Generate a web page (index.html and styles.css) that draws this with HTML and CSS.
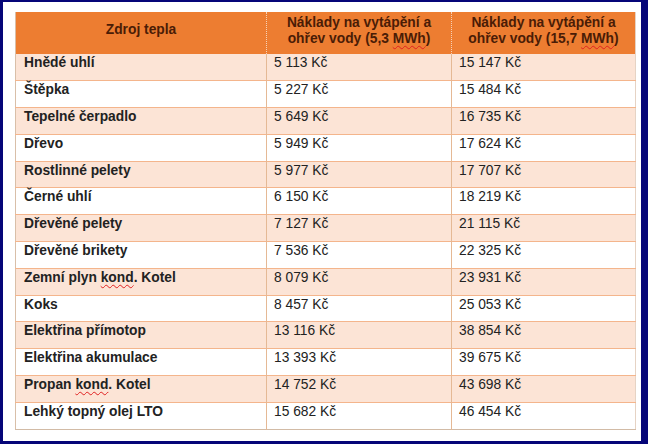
FILE: index.html
```html
<!DOCTYPE html>
<html lang="cs">
<head>
<meta charset="utf-8">
<title>Náklady na vytápění</title>
<link rel="stylesheet" href="styles.css">
</head>
<body>
<div class="frame">
  <table class="costs">
    <colgroup>
      <col class="c1"><col class="c2"><col class="c3">
    </colgroup>
    <thead>
      <tr>
        <th class="h1">Zdroj tepla</th>
        <th>Náklady na vytápění a<br>ohřev vody (5,3 <span class="sp">MWh</span>)</th>
        <th>Náklady na vytápění a<br>ohřev vody (15,7 <span class="sp">MWh</span>)</th>
      </tr>
    </thead>
    <tbody>
      <tr><td>Hnědé uhlí</td><td>5 113 Kč</td><td>15 147 Kč</td></tr>
      <tr><td>Štěpka</td><td>5 227 Kč</td><td>15 484 Kč</td></tr>
      <tr><td>Tepelné čerpadlo</td><td>5 649 Kč</td><td>16 735 Kč</td></tr>
      <tr><td>Dřevo</td><td>5 949 Kč</td><td>17 624 Kč</td></tr>
      <tr><td>Rostlinné pelety</td><td>5 977 Kč</td><td>17 707 Kč</td></tr>
      <tr><td>Černé uhlí</td><td>6 150 Kč</td><td>18 219 Kč</td></tr>
      <tr><td>Dřevěné pelety</td><td>7 127 Kč</td><td>21 115 Kč</td></tr>
      <tr><td>Dřevěné brikety</td><td>7 536 Kč</td><td>22 325 Kč</td></tr>
      <tr><td>Zemní plyn <span class="sp">kond</span>. Kotel</td><td>8 079 Kč</td><td>23 931 Kč</td></tr>
      <tr><td>Koks</td><td>8 457 Kč</td><td>25 053 Kč</td></tr>
      <tr><td>Elektřina přímotop</td><td>13 116 Kč</td><td>38 854 Kč</td></tr>
      <tr><td>Elektřina akumulace</td><td>13 393 Kč</td><td>39 675 Kč</td></tr>
      <tr><td>Propan <span class="sp">kond</span>. Kotel</td><td>14 752 Kč</td><td>43 698 Kč</td></tr>
      <tr><td>Lehký topný olej LTO</td><td>15 682 Kč</td><td>46 454 Kč</td></tr>
    </tbody>
  </table>
</div>
</body>
</html>
```

FILE: styles.css
```css
html, body {
  margin: 0;
  padding: 0;
  background: #ffffff;
}

.frame {
  box-sizing: border-box;
  width: 648px;
  height: 444px;
  border-style: solid;
  border-color: #050578;
  border-width: 2px 7px 3px 3px;
  background: #ffffff;
  padding: 10px 0 0 12px;
  font-family: "Liberation Sans", Arial, sans-serif;
  font-size: 13.8px;
  color: #222222;
}

.costs {
  border-collapse: collapse;
  table-layout: fixed;
  width: 620px;
  border-left: 1px solid #d9bfa8;
  border-bottom: 1px solid #d2bba6;
  border-right: 1px solid #e6d3c4;
}

.c1 { width: 251px; }
.c2 { width: 185px; }
.c3 { width: 184px; }

.costs thead tr {
  height: 42px;
  background: #ed7d31;
}

.costs th {
  vertical-align: top;
  padding: 3px 2px 0;
  line-height: 16px;
  font-weight: bold;
  color: #4a1c06;
  text-align: center;
  border-left: 1px dotted #f6d2b8;
}

.costs th.h1 {
  padding-top: 10px;
  border-left: none;
}

.costs tbody tr {
  height: 26.8px;
}

.costs tbody tr:nth-child(odd) {
  background: #fce4d6;
}

.costs td {
  vertical-align: top;
  padding: 1px 6px 0 7px;
  line-height: 15px;
  border-top: 1px solid #f4b58c;
  border-left: 1px solid #e5b995;
  white-space: nowrap;
}

.costs td:first-child {
  font-weight: bold;
  padding-left: 8px;
  border-left: none;
}

.costs tbody tr:first-child td {
  border-top: none;
}

.sp {
  text-decoration: underline wavy #e02020;
  text-decoration-thickness: 1px;
  text-underline-offset: 2px;
}
```
